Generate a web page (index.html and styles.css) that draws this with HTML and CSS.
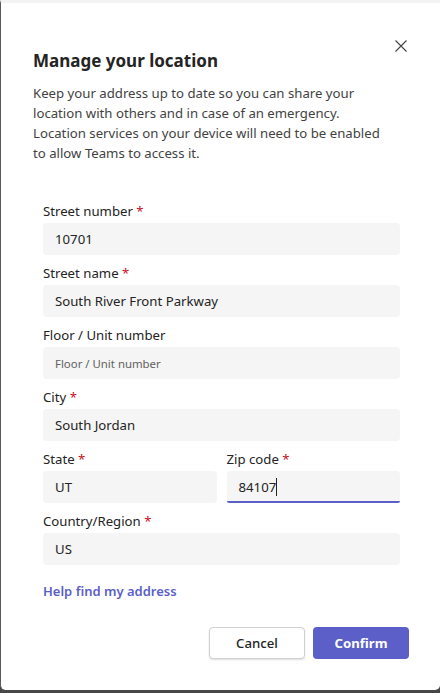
FILE: index.html
```html
<!DOCTYPE html>
<html lang="en">

<head>
    <meta charset="UTF-8">
    <meta name="viewport" content="width=device-width, initial-scale=1.0">
    <title>Manage your location</title>
    <link rel="stylesheet" href="styles.css">
</head>

<body>
    <div class="dialog">
        <div class="dialog-head">
            <h2>Manage your location</h2>
            <button class="close-btn" aria-label="Close">
                <svg width="12" height="12" viewBox="0 0 12 12">
                    <path d="M0.5 0.5 L11.5 11.5 M11.5 0.5 L0.5 11.5" stroke="#424242" stroke-width="1.1" fill="none" />
                </svg>
            </button>
        </div>
        <p class="intro">Keep your address up to date so you can share your location with others and in case of an
            emergency. Location services on your device will need to be enabled to allow Teams to access it.</p>

        <form class="address-form">
            <div class="field">
                <label>Street number <span class="req">*</span></label>
                <div class="input">10701</div>
            </div>
            <div class="field">
                <label>Street name <span class="req">*</span></label>
                <div class="input">South River Front Parkway</div>
            </div>
            <div class="field">
                <label>Floor / Unit number</label>
                <div class="input placeholder">Floor / Unit number</div>
            </div>
            <div class="field">
                <label>City <span class="req">*</span></label>
                <div class="input">South Jordan</div>
            </div>
            <div class="field-row">
                <div class="field">
                    <label>State <span class="req">*</span></label>
                    <div class="input">UT</div>
                </div>
                <div class="field">
                    <label>Zip code <span class="req">*</span></label>
                    <div class="input focused">84107<span class="caret"></span></div>
                </div>
            </div>
            <div class="field">
                <label>Country/Region <span class="req">*</span></label>
                <div class="input">US</div>
            </div>
            <a href="#" class="help-link">Help find my address</a>
        </form>

        <div class="actions">
            <button class="btn cancel-btn">Cancel</button>
            <button class="btn confirm-btn">Confirm</button>
        </div>
    </div>
</body>

</html>
```

FILE: styles.css
```css
body {
    margin: 0;
    padding: 0;
    background-color: #474747;
    font-family: "Noto Sans", "Open Sans", sans-serif;
    color: #242424;
}

.dialog {
    box-sizing: border-box;
    height: 690px;
    background-color: #fff;
    border-left: 1px solid #5a5a5a;
    border-top: 3px solid #f3f3f3;
    border-radius: 0 0 5px 5px;
    padding: 0 31px 0 32px;
}

.dialog-head {
    display: flex;
    justify-content: space-between;
    align-items: flex-start;
    padding-top: 35px;
}

.dialog-head h2 {
    margin: 10px 0 0;
    font-size: 17px;
    line-height: 26px;
    font-weight: 700;
}

.close-btn {
    border: none;
    background: none;
    padding: 0;
    margin: 2px 2px 0 0;
    width: 12px;
    height: 12px;
    cursor: pointer;
}

.intro {
    max-width: 355px;
    margin: 9px 0 0;
    font-size: 13.2px;
    line-height: 20px;
    color: #424242;
}

.address-form {
    display: flex;
    flex-direction: column;
    margin: 38px 9px 0 10px;
}

.field {
    display: flex;
    flex-direction: column;
    margin-bottom: 8px;
}

.field label {
    font-size: 13.2px;
    line-height: 20px;
    margin-bottom: 2px;
}

.req {
    color: #c50f1f;
}

.input {
    box-sizing: border-box;
    height: 32px;
    padding: 0 12px;
    display: flex;
    align-items: center;
    background-color: #f5f5f5;
    border-radius: 4px;
    font-size: 13.2px;
    color: #242424;
}

.input.placeholder {
    font-size: 11.4px;
    color: #616161;
}

.input.focused {
    border-bottom: 2px solid #5b5fc7;
    border-radius: 4px 4px 2px 2px;
    padding-top: 2px;
}

.caret {
    display: inline-block;
    width: 1px;
    height: 18px;
    background-color: #242424;
}

.field-row {
    display: grid;
    grid-template-columns: 1fr 1fr;
    gap: 10px;
}

.help-link {
    margin-top: 8px;
    font-size: 13px;
    line-height: 20px;
    font-weight: 600;
    color: #5b5fc7;
    text-decoration: none;
    align-self: flex-start;
}

.actions {
    display: flex;
    justify-content: flex-end;
    gap: 8px;
    margin-top: 26px;
}

.btn {
    width: 96px;
    height: 32px;
    border-radius: 4px;
    font-family: inherit;
    font-size: 13.2px;
    cursor: pointer;
}

.cancel-btn {
    background-color: #fff;
    border: 1px solid #d1d1d1;
    color: #242424;
    font-weight: 500;
    box-shadow: 0 1px 2px rgba(0, 0, 0, 0.14);
}

.confirm-btn {
    background-color: #5b5fc7;
    border: none;
    color: #fff;
    font-weight: 700;
}
```
